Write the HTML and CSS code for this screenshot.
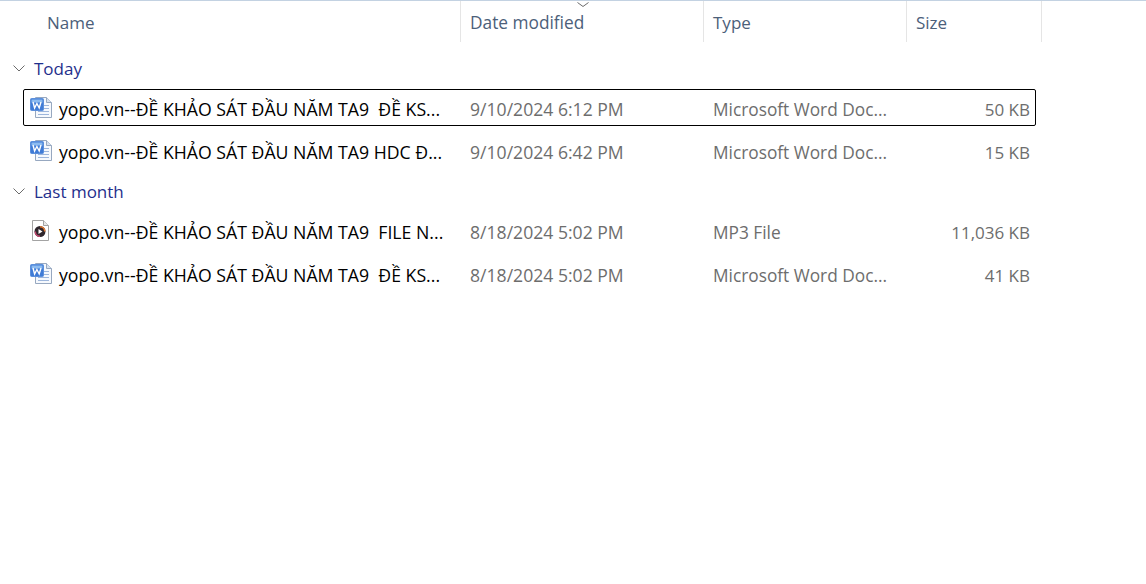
FILE: index.html
```html
<!DOCTYPE html>
<html>
<head>
    <title>Downloads</title>
    <link rel="stylesheet" href="styles.css">
</head>
<body>
    <svg class="defs" width="0" height="0">
        <symbol id="word-icon" viewBox="0 0 23 23">
            <path d="M5.500 1.500h11l5 5v15h-16z" fill="#f6f9fd" stroke="#97a8c0"/>
            <path d="M16.500 1.500v5h5" fill="#d5e0ef" stroke="#97a8c0"/>
            <path d="M8 9.500h11M8 12.500h11M8 15.500h11M8 18.500h11" stroke="#9db6dc"/>
            <rect x="0.500" y="2.500" width="13" height="12" rx="1" fill="#3f7bd6" stroke="#5b8fdc"/>
            <rect x="1.500" y="3.500" width="11" height="3" fill="#8dbcf0"/>
            <path d="M3 6l1.600 6L6.900 7.500 9.200 12 11 6" fill="none" stroke="#fff" stroke-width="1.400"/>
        </symbol>
        <symbol id="mp3-icon" viewBox="0 0 17 21">
            <path d="M0.500 0.500h11l5 5v15h-16z" fill="#fff" stroke="#a3a3a3"/>
            <path d="M11.500 0.500v5h5" fill="#e8e8e8" stroke="#a3a3a3"/>
            <circle cx="8" cy="11.500" r="5.500" fill="#2f262c"/>
            <path d="M8 6a5.500 5.500 0 0 1 5.500 5.500h-1.500A4 4 0 0 0 8 7.500z" fill="#e8792f"/>
            <path d="M2.500 11.500A5.500 5.500 0 0 0 8 17v-1.500a4 4 0 0 1-4-4z" fill="#c2476f"/>
            <path d="M6.500 9l4 2.500-4 2.500z" fill="#fff"/>
        </symbol>
    </svg>

    <div class="header">
        <div class="col col-name">Name</div>
        <div class="col col-date">Date modified<span class="sort"><svg width="12" height="5" viewBox="0 0 12 5"><path d="M0.500 0.500L6 4.500l5.500-4" fill="none" stroke="#6b6b6b"/></svg></span></div>
        <div class="col col-type">Type</div>
        <div class="col col-size">Size</div>
    </div>

    <div class="group group-first">
        <svg class="chevron" width="12" height="7" viewBox="0 0 12 7"><path d="M0.500 0.500L6 6l5.500-5.500" fill="none" stroke="#6b6b6b"/></svg>
        <span>Today</span>
    </div>
    <div class="rows">
        <div class="row selected">
            <div class="name"><svg class="icon" width="23" height="23"><use href="#word-icon"/></svg><span>yopo.vn--ĐỀ KHẢO SÁT ĐẦU NĂM TA9  ĐỀ KS...</span></div>
            <div class="cell date">9/10/2024 6:12 PM</div>
            <div class="cell type">Microsoft Word Doc...</div>
            <div class="cell size">50 KB</div>
        </div>
        <div class="row">
            <div class="name"><svg class="icon" width="23" height="23"><use href="#word-icon"/></svg><span>yopo.vn--ĐỀ KHẢO SÁT ĐẦU NĂM TA9 HDC Đ...</span></div>
            <div class="cell date">9/10/2024 6:42 PM</div>
            <div class="cell type">Microsoft Word Doc...</div>
            <div class="cell size">15 KB</div>
        </div>
    </div>

    <div class="group">
        <svg class="chevron" width="12" height="7" viewBox="0 0 12 7"><path d="M0.500 0.500L6 6l5.500-5.500" fill="none" stroke="#6b6b6b"/></svg>
        <span>Last month</span>
    </div>
    <div class="rows">
        <div class="row">
            <div class="name"><svg class="icon icon-mp3" width="17" height="21"><use href="#mp3-icon"/></svg><span>yopo.vn--ĐỀ KHẢO SÁT ĐẦU NĂM TA9  FILE N...</span></div>
            <div class="cell date">8/18/2024 5:02 PM</div>
            <div class="cell type">MP3 File</div>
            <div class="cell size">11,036 KB</div>
        </div>
        <div class="row">
            <div class="name"><svg class="icon" width="23" height="23"><use href="#word-icon"/></svg><span>yopo.vn--ĐỀ KHẢO SÁT ĐẦU NĂM TA9  ĐỀ KS...</span></div>
            <div class="cell date">8/18/2024 5:02 PM</div>
            <div class="cell type">Microsoft Word Doc...</div>
            <div class="cell size">41 KB</div>
        </div>
    </div>
</body>
</html>
```

FILE: styles.css
```css
body { margin: 0; background: #fff; font-family: "Open Sans", "Noto Sans", sans-serif; font-size: 17px; color: #000; overflow: hidden; }
.defs { display: block; height: 0; }
.header { display: flex; height: 41px; border-top: 1px solid #c3d2e2; color: #4c607a; }
.col { box-sizing: border-box; padding: 9px 0 0 9px; border-left: 1px solid #e5e5e5; line-height: 26px; }
.col-name { width: 460px; padding-left: 47px; border-left: 0; }
.col-date { width: 243px; position: relative; font-size: 17.3px; }
.col-type { width: 203px; }
.col-size { width: 136px; border-right: 1px solid #e5e5e5; }
.sort { position: absolute; left: 116px; top: 0; line-height: 0; }
.group { display: flex; align-items: center; height: 28px; padding: 8px 0 7px 13px; color: #1f2f8c; }
.group-first { padding-top: 12px; }
.chevron { margin-right: 9px; }
.rows { display: flex; flex-direction: column; gap: 6px; }
.row { box-sizing: border-box; display: grid; grid-template-columns: 437px 243px 203px 1fr; align-items: center; width: 1013px; height: 37px; margin-left: 23px; padding-top: 2px; border: 1px solid transparent; border-radius: 2px; }
.selected { border-color: #000; }
.name { display: flex; align-items: center; padding-left: 6px; font-size: 17.7px; white-space: pre; }
.icon { flex: none; margin-right: 6px; margin-top: -2px; }
.icon-mp3 { margin-left: 2px; margin-right: 10px; }
.cell { padding: 2px 0 0 9px; color: #6d6d6d; line-height: 24px; }
.date { padding-top: 0; font-size: 17.6px; }
.type { font-size: 17.3px; }
.size { padding: 2px 5px 0 0; text-align: right; }
```
